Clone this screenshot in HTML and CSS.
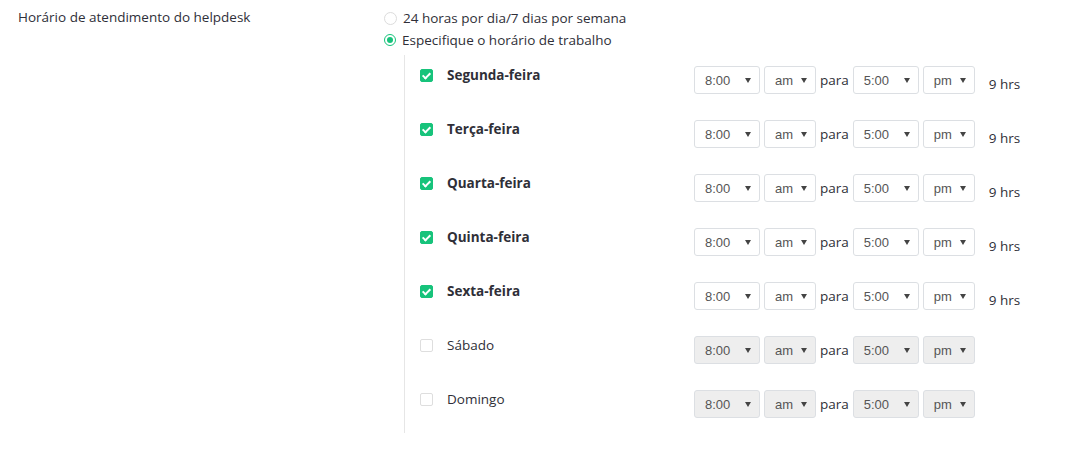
FILE: index.html
```html
<!DOCTYPE html>
<html lang="pt">
<head>
  <meta charset="UTF-8">
  <meta name="viewport" content="width=device-width, initial-scale=1.0">
  <title>Horário de atendimento</title>
  <link rel="stylesheet" href="styles.css">
</head>
<body>
  <div class="field">
    <div class="field-label">Horário de atendimento do helpdesk</div>
    <div class="field-body">
      <label class="radio-line">
        <span class="radio"></span>
        24 horas por dia/7 dias por semana
      </label>
      <label class="radio-line">
        <span class="radio checked"></span>
        Especifique o horário de trabalho
      </label>

      <div class="days">
        <div class="day">
          <label class="day-name"><span class="check on"></span><b>Segunda-feira</b></label>
          <div class="times">
            <span class="select wide"><select><option>8:00</option></select></span>
            <span class="select"><select><option>am</option></select></span>
            <span class="para">para</span>
            <span class="select wide"><select><option>5:00</option></select></span>
            <span class="select"><select><option>pm</option></select></span>
          </div>
          <span class="hours">9 hrs</span>
        </div>
        <div class="day">
          <label class="day-name"><span class="check on"></span><b>Terça-feira</b></label>
          <div class="times">
            <span class="select wide"><select><option>8:00</option></select></span>
            <span class="select"><select><option>am</option></select></span>
            <span class="para">para</span>
            <span class="select wide"><select><option>5:00</option></select></span>
            <span class="select"><select><option>pm</option></select></span>
          </div>
          <span class="hours">9 hrs</span>
        </div>
        <div class="day">
          <label class="day-name"><span class="check on"></span><b>Quarta-feira</b></label>
          <div class="times">
            <span class="select wide"><select><option>8:00</option></select></span>
            <span class="select"><select><option>am</option></select></span>
            <span class="para">para</span>
            <span class="select wide"><select><option>5:00</option></select></span>
            <span class="select"><select><option>pm</option></select></span>
          </div>
          <span class="hours">9 hrs</span>
        </div>
        <div class="day">
          <label class="day-name"><span class="check on"></span><b>Quinta-feira</b></label>
          <div class="times">
            <span class="select wide"><select><option>8:00</option></select></span>
            <span class="select"><select><option>am</option></select></span>
            <span class="para">para</span>
            <span class="select wide"><select><option>5:00</option></select></span>
            <span class="select"><select><option>pm</option></select></span>
          </div>
          <span class="hours">9 hrs</span>
        </div>
        <div class="day">
          <label class="day-name"><span class="check on"></span><b>Sexta-feira</b></label>
          <div class="times">
            <span class="select wide"><select><option>8:00</option></select></span>
            <span class="select"><select><option>am</option></select></span>
            <span class="para">para</span>
            <span class="select wide"><select><option>5:00</option></select></span>
            <span class="select"><select><option>pm</option></select></span>
          </div>
          <span class="hours">9 hrs</span>
        </div>
        <div class="day off">
          <label class="day-name"><span class="check"></span>Sábado</label>
          <div class="times">
            <span class="select wide"><select disabled><option>8:00</option></select></span>
            <span class="select"><select disabled><option>am</option></select></span>
            <span class="para">para</span>
            <span class="select wide"><select disabled><option>5:00</option></select></span>
            <span class="select"><select disabled><option>pm</option></select></span>
          </div>
        </div>
        <div class="day off">
          <label class="day-name"><span class="check"></span>Domingo</label>
          <div class="times">
            <span class="select wide"><select disabled><option>8:00</option></select></span>
            <span class="select"><select disabled><option>am</option></select></span>
            <span class="para">para</span>
            <span class="select wide"><select disabled><option>5:00</option></select></span>
            <span class="select"><select disabled><option>pm</option></select></span>
          </div>
        </div>
      </div>
    </div>
  </div>
</body>
</html>
```

FILE: styles.css
```css
body {
  margin: 0;
  background: #fff;
  color: #2f2f38;
  font-family: "Open Sans", "Noto Sans", sans-serif;
  font-size: 13.5px;
}

.field {
  display: flex;
  padding: 7px 0 0 18px;
}

.field-label {
  width: 366px;
  line-height: 20px;
}

.field-body {
  display: flex;
  flex-direction: column;
}

.radio-line {
  display: flex;
  align-items: center;
  gap: 6px;
  height: 22px;
  line-height: 20px;
}

.radio {
  width: 11px;
  height: 11px;
  border: 1px solid #dcdcdc;
  border-radius: 50%;
  box-sizing: content-box;
  position: relative;
}

.radio.checked {
  border: 1.5px solid #17c37b;
  width: 10px;
  height: 10px;
}

.radio.checked::after {
  content: '';
  position: absolute;
  top: 2px;
  left: 2px;
  width: 6px;
  height: 6px;
  border-radius: 50%;
  background: #17c37b;
}

/* Lista de dias */
.days {
  margin: 4px 0 0 20px;
  border-left: 1px solid #e6e6e6;
  padding: 0 0 0 15px;
}

.day {
  display: flex;
  align-items: flex-start;
  height: 54px;
  padding-top: 10px;
  box-sizing: border-box;
}

.day-name {
  display: flex;
  align-items: center;
  gap: 14px;
  width: 274px;
  line-height: 20px;
}

.day-name b {
  font-weight: 700;
}

.check {
  width: 11px;
  height: 11px;
  border: 1px solid #dedede;
  border-radius: 2px;
  position: relative;
}

.check.on {
  border-color: #17c37b;
  background: #17c37b;
}

.check.on::after {
  content: '';
  position: absolute;
  left: 3px;
  top: 1px;
  width: 3px;
  height: 6px;
  border: solid #fff;
  border-width: 0 2px 2px 0;
  transform: rotate(45deg);
}

.times {
  display: flex;
  align-items: center;
  gap: 4px;
  margin-top: 1px;
}

.select {
  position: relative;
  display: block;
  width: 52px;
  height: 28px;
}

.select.wide {
  width: 66px;
}

.select select {
  appearance: none;
  width: 100%;
  height: 100%;
  margin: 0;
  padding: 0 0 0 10px;
  border: 1px solid #dcdfe3;
  border-radius: 3px;
  background: #fff;
  color: #555;
  font-family: "Liberation Sans", Arial, sans-serif;
  font-size: 13px;
}

.select select:disabled {
  background: #eee;
  opacity: 1;
}

.select::after {
  content: '';
  position: absolute;
  right: 9px;
  top: 12px;
  border-left: 3px solid transparent;
  border-right: 3px solid transparent;
  border-top: 5px solid #444;
  pointer-events: none;
}

.para {
  line-height: 20px;
}

.hours {
  margin: 9px 0 0 14px;
  line-height: 20px;
}
```
